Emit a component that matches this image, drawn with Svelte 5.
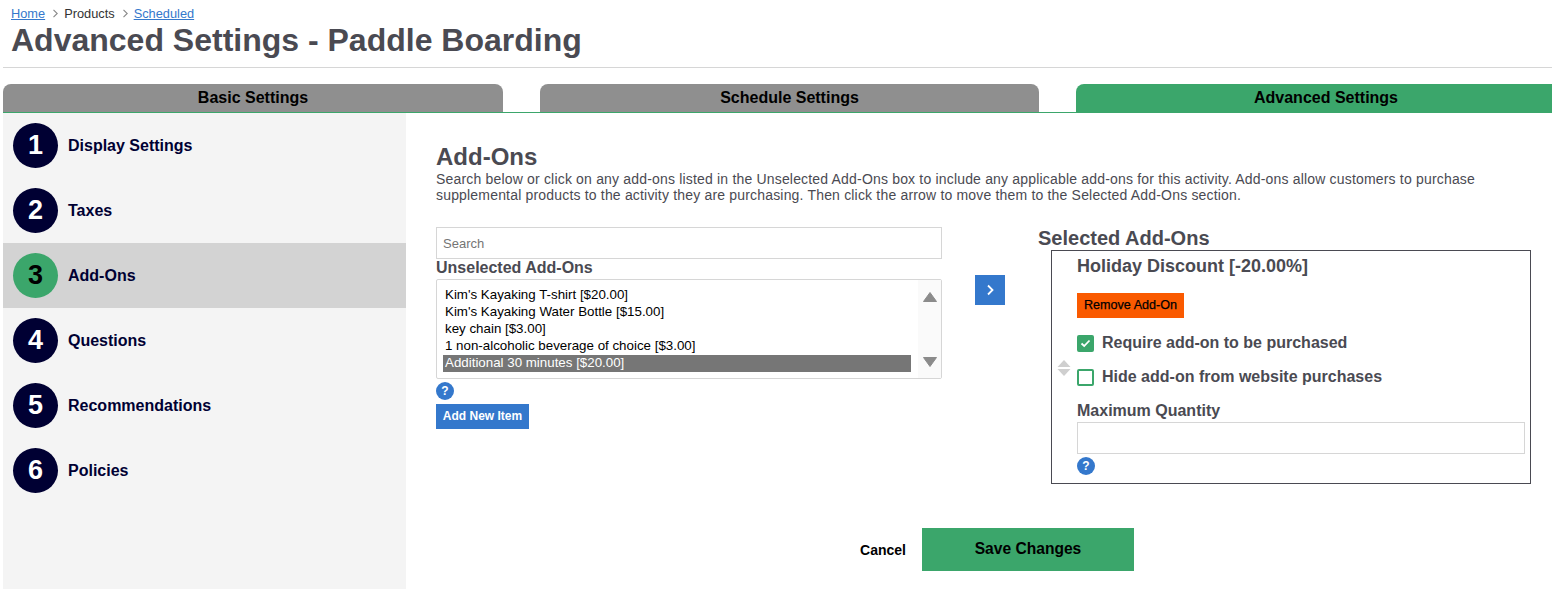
<script lang="ts">
  type Step = { n: number; label: string; active?: boolean }

  const steps: Step[] = [
    { n: 1, label: 'Display Settings' },
    { n: 2, label: 'Taxes' },
    { n: 3, label: 'Add-Ons', active: true },
    { n: 4, label: 'Questions' },
    { n: 5, label: 'Recommendations' },
    { n: 6, label: 'Policies' },
  ]

  const unselected = [
    "Kim's Kayaking T-shirt [$20.00]",
    "Kim's Kayaking Water Bottle [$15.00]",
    'key chain [$3.00]',
    '1 non-alcoholic beverage of choice [$3.00]',
    'Additional 30 minutes [$20.00]',
  ]
  let picked = $state(4)
  let required = $state(true)
  let hidden = $state(false)
</script>

<div class="page">
  <header class="top">
    <nav class="crumbs">
      <a href="#home">Home</a>
      <svg class="sep" width="7" height="9" viewBox="0 0 7 9"><path d="M1.5 .8 5.2 4.5 1.5 8.2" /></svg>
      <span>Products</span>
      <svg class="sep" width="7" height="9" viewBox="0 0 7 9"><path d="M1.5 .8 5.2 4.5 1.5 8.2" /></svg>
      <a href="#scheduled">Scheduled</a>
    </nav>
    <h1>Advanced Settings - Paddle Boarding</h1>
  </header>

  <div class="tabs">
    <div class="tab">Basic Settings</div>
    <div class="tab">Schedule Settings</div>
    <div class="tab current">Advanced Settings</div>
  </div>

  <div class="body">
    <aside class="side">
      {#each steps as s (s.n)}
        <div class="step" class:active={s.active}>
          <span class="num">{s.n}</span>
          <span class="step-label">{s.label}</span>
        </div>
      {/each}
    </aside>

    <main class="content">
      <h2>Add-Ons</h2>
      <p class="lede">
        Search below or click on any add-ons listed in the Unselected Add-Ons box to include any applicable add-ons for this activity. Add-ons allow customers to purchase supplemental products to the activity they are purchasing. Then click the arrow to move them to the Selected Add-Ons section.
      </p>

      <div class="columns">
        <section class="left">
          <input class="search" type="text" placeholder="Search" />
          <div class="label">Unselected Add-Ons</div>
          <div class="listbox">
            <ul>
              {#each unselected as item, i}
                <li class:picked={picked === i}>
                  <button type="button" onclick={() => (picked = i)}>{item}</button>
                </li>
              {/each}
            </ul>
            <div class="scroll">
              <svg width="16" height="12" viewBox="0 0 16 12"><path d="M8 1.5 14.5 10.5H1.5Z" /></svg>
              <svg width="16" height="12" viewBox="0 0 16 12"><path d="M8 10.5 1.5 1.5H14.5Z" /></svg>
            </div>
          </div>
          <span class="help">?</span>
          <button type="button" class="add-new">Add New Item</button>
        </section>

        <div class="mover">
          <button type="button" class="arrow" aria-label="Move to selected">
            <svg width="10" height="12" viewBox="0 0 10 12"><path d="M3 1.5 7.5 6 3 10.5" /></svg>
          </button>
        </div>

        <section class="right">
          <div class="selected-title">Selected Add-Ons</div>
          <div class="selected-box">
            <svg class="drag" width="14" height="18" viewBox="0 0 14 18">
              <path d="M7 1 13.5 8H.5Z" />
              <path d="M7 17 .5 10H13.5Z" />
            </svg>
            <div class="addon-name">Holiday Discount [-20.00%]</div>
            <button type="button" class="remove">Remove Add-On</button>
            <button type="button" class="check-row" onclick={() => (required = !required)}>
              <span class="box" class:on={required}>
                {#if required}
                  <svg width="11" height="9" viewBox="0 0 11 9"><path d="M1.5 4.5 4.2 7 9.5 1.5" /></svg>
                {/if}
              </span>
              Require add-on to be purchased
            </button>
            <button type="button" class="check-row" onclick={() => (hidden = !hidden)}>
              <span class="box" class:on={hidden}>
                {#if hidden}
                  <svg width="11" height="9" viewBox="0 0 11 9"><path d="M1.5 4.5 4.2 7 9.5 1.5" /></svg>
                {/if}
              </span>
              Hide add-on from website purchases
            </button>
            <div class="qty-label">Maximum Quantity</div>
            <input class="qty" type="text" />
            <span class="help">?</span>
          </div>
        </section>
      </div>

      <div class="actions">
        <button type="button" class="cancel">Cancel</button>
        <button type="button" class="save">Save Changes</button>
      </div>
    </main>
  </div>
</div>

<style>
  :global(body) {
    margin: 0;
    background: #fff;
  }

  .page {
    width: 1552px;
    height: 600px;
    overflow: hidden;
    font-family: 'Liberation Sans', Arial, sans-serif;
    color: #4a4a52;
  }

  .top {
    margin-left: 3px;
    height: 67px;
    border-bottom: 1px solid #d6d6d6;
    padding-left: 8px;
  }

  .crumbs {
    display: flex;
    align-items: center;
    height: 27px;
    font-size: 12.8px;
    color: #333;
  }

  .crumbs a {
    color: #3478cc;
  }

  .sep {
    margin: 0 5px 0 7px;
  }

  .sep path {
    fill: none;
    stroke: #888;
    stroke-width: 1.1;
  }

  h1 {
    margin: 0;
    font-size: 32px;
    line-height: 27px;
    font-weight: 700;
    color: #4a4a52;
  }

  .tabs {
    display: flex;
    gap: 37px;
    margin: 16px 0 0 3px;
    height: 28px;
    border-bottom: 1px solid #3ba66b;
  }

  .tab {
    flex: 0 0 500px;
    background: #8f8f8f;
    border-radius: 8px 8px 0 0;
    text-align: center;
    font-size: 16px;
    font-weight: 700;
    line-height: 28px;
    color: #000;
  }

  .tab:nth-child(2) {
    flex-basis: 499px;
  }

  .tab.current {
    background: #3ba66b;
  }

  .body {
    display: flex;
    margin-left: 3px;
    height: 476px;
  }

  .side {
    width: 403px;
    flex: none;
    background: #f4f4f4;
  }

  .step {
    display: flex;
    align-items: center;
    gap: 10px;
    height: 65px;
    padding-left: 10px;
    box-sizing: border-box;
  }

  .step.active {
    background: #d3d3d3;
  }

  .num {
    width: 45px;
    height: 45px;
    border-radius: 50%;
    flex: none;
    display: flex;
    align-items: center;
    justify-content: center;
    background: #000033;
    color: #fff;
    font-size: 27px;
    font-weight: 700;
  }

  .active .num {
    background: #3ba66b;
    color: #000;
  }

  .step-label {
    font-size: 16px;
    font-weight: 700;
    color: #000033;
  }

  .content {
    flex: 1;
    padding: 32px 21px 0 30px;
    min-width: 0;
  }

  h2 {
    margin: 0;
    font-size: 24px;
    line-height: 24px;
    font-weight: 700;
  }

  .lede {
    margin: 2px 0 0;
    font-size: 14px;
    letter-spacing: 0.18px;
    line-height: 16px;
  }

  .columns {
    display: flex;
    margin-top: 24px;
  }

  .left {
    width: 506px;
    flex: none;
    display: flex;
    flex-direction: column;
    align-items: flex-start;
  }

  .search {
    width: 100%;
    height: 32px;
    box-sizing: border-box;
    border: 1px solid #d6d6d6;
    padding: 0 6px;
    font: 13px 'Liberation Sans', Arial, sans-serif;
    outline: none;
  }

  .search::placeholder {
    color: #757575;
  }

  .label {
    font-size: 16px;
    font-weight: 700;
    line-height: 18px;
    margin-bottom: 2px;
  }

  .listbox {
    width: 100%;
    height: 100px;
    box-sizing: border-box;
    border: 1px solid #d6d6d6;
    border-radius: 2px;
    display: flex;
    justify-content: space-between;
  }

  .listbox ul {
    list-style: none;
    margin: 0;
    padding: 7px 0 0 6px;
    width: 468px;
    flex: none;
  }

  .listbox li {
    height: 17px;
  }

  .listbox li button {
    display: block;
    width: 100%;
    height: 17px;
    border: 0;
    background: none;
    padding: 0 0 2px 2px;
    text-align: left;
    font: 13.33px/15px 'Liberation Sans', Arial, sans-serif;
    color: #000;
  }

  .listbox li.picked button {
    background: #767676;
    color: #fff;
  }

  .scroll {
    width: 23px;
    background: #fafafa;
    display: flex;
    flex-direction: column;
    align-items: center;
    justify-content: space-between;
    padding: 11px 0 10px;
    box-sizing: border-box;
  }

  .scroll path {
    fill: #8b8b8b;
    stroke: #8b8b8b;
    stroke-width: 1;
    stroke-linejoin: round;
  }

  .help {
    display: flex;
    align-items: center;
    justify-content: center;
    width: 18px;
    height: 18px;
    margin-top: 3px;
    border-radius: 50%;
    background: #3478cc;
    color: #fff;
    font-size: 12px;
    font-weight: 700;
  }

  .add-new {
    margin-top: 4px;
    width: 93px;
    height: 25px;
    border: 0;
    padding: 0 0 2px;
    background: #3478cc;
    color: #fff;
    font: 700 12px 'Liberation Sans', Arial, sans-serif;
  }

  .mover {
    width: 96px;
    flex: none;
    padding: 48px 0 0 33px;
    box-sizing: border-box;
  }

  .arrow {
    width: 30px;
    height: 30px;
    border: 0;
    padding: 0;
    background: #3478cc;
    display: flex;
    align-items: center;
    justify-content: center;
  }

  .arrow path {
    fill: none;
    stroke: #fff;
    stroke-width: 1.8;
  }

  .right {
    width: 493px;
    flex: none;
  }

  .selected-title {
    font-size: 20px;
    font-weight: 700;
    line-height: 23px;
  }

  .selected-box {
    position: relative;
    margin-left: 13px;
    width: 480px;
    height: 234px;
    box-sizing: border-box;
    border: 1px solid #4a4a52;
    padding: 5px 5px 0 25px;
    display: flex;
    flex-direction: column;
    align-items: flex-start;
  }

  .drag {
    position: absolute;
    left: 5px;
    top: 108px;
  }

  .drag path {
    fill: #cfcfcf;
  }

  .addon-name {
    font-size: 18px;
    font-weight: 700;
    line-height: 21px;
  }

  .remove {
    margin-top: 16px;
    width: 107px;
    height: 25px;
    border: 0;
    padding: 0 0 2px;
    background: #fa5a00;
    color: #000;
    font: 12.6px 'Liberation Sans', Arial, sans-serif;
    -webkit-text-stroke: 0.25px #000;
  }

  .check-row {
    display: flex;
    align-items: center;
    gap: 8px;
    margin-top: 16px;
    border: 0;
    background: none;
    padding: 0;
    height: 18px;
    font: 700 16px 'Liberation Sans', Arial, sans-serif;
    color: #4a4a52;
  }

  .box {
    width: 17px;
    height: 17px;
    box-sizing: border-box;
    border: 2px solid #3ba66b;
    border-radius: 2px;
    background: #fff;
    display: flex;
    align-items: center;
    justify-content: center;
  }

  .box.on {
    background: #3ba66b;
  }

  .box path {
    fill: none;
    stroke: #fff;
    stroke-width: 1.8;
  }

  .qty-label {
    margin-top: 16px;
    font-size: 16px;
    font-weight: 700;
    line-height: 18px;
  }

  .qty {
    margin-top: 2px;
    width: 100%;
    height: 32px;
    box-sizing: border-box;
    border: 1px solid #d6d6d6;
    outline: none;
  }

  .actions {
    display: flex;
    align-items: center;
    margin-top: 44px;
    margin-left: 424px;
  }

  .cancel {
    width: 46px;
    border: 0;
    background: none;
    padding: 0;
    margin-right: 16px;
    font: 700 14px 'Liberation Sans', Arial, sans-serif;
    color: #000;
  }

  .save {
    width: 212px;
    height: 43px;
    border: 0;
    padding: 0 0 1px;
    background: #3ba66b;
    color: #000;
    font: 700 15.6px 'Liberation Sans', Arial, sans-serif;
  }
</style>
